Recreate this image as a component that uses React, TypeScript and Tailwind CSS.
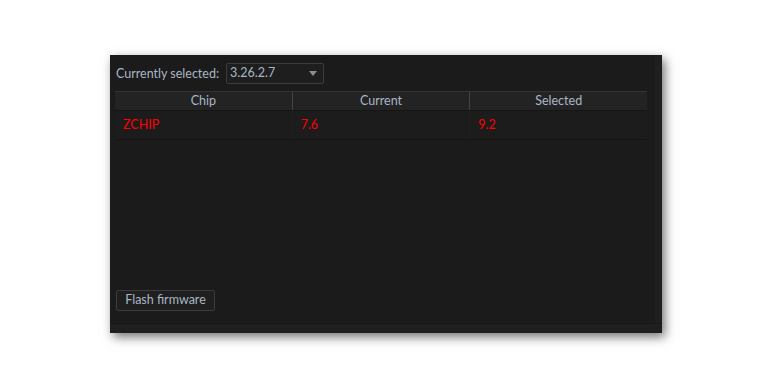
const columns = ['Chip', 'Current', 'Selected'];
const row = ['ZCHIP', '7.6', '9.2'];

const App = () => {
  return (
    <div className="h-[389px] w-[772px] bg-white pl-[110px] pt-[55px]" style={{ fontFamily: 'Lato, "Open Sans", sans-serif' }}>
      <div className="flex h-[278px] w-[552px] flex-col bg-[#1f1f1f] shadow-[3px_4px_10px_rgba(0,0,0,0.55)]">
        <div className="flex flex-1">
          <div className="flex w-[545px] flex-col bg-[#1b1b1b] pl-[5px] pr-[8px] pt-[8px] pb-[12px]">
            <div className="flex items-center gap-[7px] pl-[1px]">
              <span className="pt-[1px] text-[12.5px] text-[#a9b6c3]">Currently selected:</span>
              <div className="flex h-[21px] w-[98px] items-center justify-between rounded-[2px] border border-[#3c3c3c] bg-[#1e1e1e] pl-[3px] pr-[6px]">
                <span className="text-[12.5px] text-[#a9b6c3]">3.26.2.7</span>
                <svg width="8" height="5" viewBox="0 0 8 5">
                  <path d="M0 0h8L4 5z" fill="#8a8f95" />
                </svg>
              </div>
            </div>

            <div className="mt-[7px] flex flex-col">
              <div className="flex h-[19px] border-t border-[#333] bg-[#232323]">
                {columns.map((c, i) => (
                  <div
                    key={c}
                    className={`flex flex-1 items-center justify-center pt-[1px] text-[12.5px] text-[#a9b6c3] ${i < 2 ? 'border-r border-[#444]' : ''}`}
                  >
                    {c}
                  </div>
                ))}
              </div>
              <div className="flex h-[30px] border-b border-t border-[#151515] bg-[#1c1c1c]">
                {row.map((v, i) => (
                  <div
                    key={i}
                    className={`flex flex-1 items-center pl-[8px] pt-[1px] text-[12.5px] text-[#f00] ${i < 2 ? 'border-r border-[#202020]' : ''}`}
                  >
                    {v}
                  </div>
                ))}
              </div>
            </div>

            <div className="mt-auto pl-[1px]">
              <button className="h-[21px] w-[99px] rounded-[2px] border border-[#3c3c3c] bg-[#1f1f1f] text-[12.5px] text-[#a9b6c3]">
                Flash firmware
              </button>
            </div>
          </div>
          <div className="flex-1 bg-[#1f1f1f]" />
        </div>
        <div className="h-[10px] border-t border-[#171717] bg-[#1f1f1f]" />
      </div>
    </div>
  );
};

export default App;
